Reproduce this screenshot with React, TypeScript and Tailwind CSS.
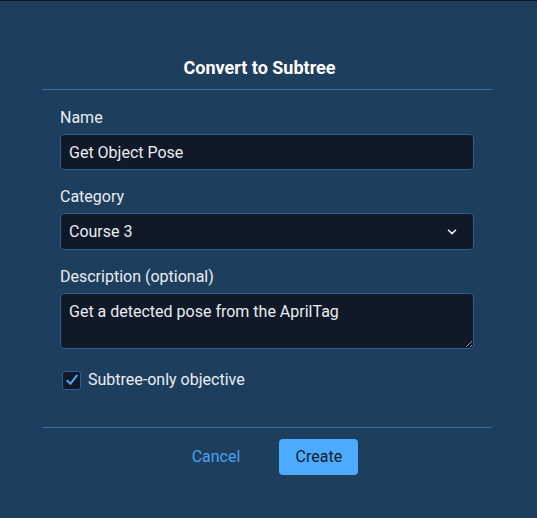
import React from "react";

export default function App() {
  return (
    <div
      className="w-[537px] h-[518px] bg-[#1e3e5d] border-t border-[#0d1520] overflow-hidden"
      style={{ fontFamily: "Roboto, 'Liberation Sans', sans-serif" }}
    >
      <div className="mx-[42px] w-[450px]">
        <div className="pt-[55px] pb-[9px] border-b border-[#3a6fa3] text-center pr-[15px]">
          <h2 className="text-[18px] leading-[24px] font-bold text-white">Convert to Subtree</h2>
        </div>
        <div className="pl-[18px] pt-[18px] flex flex-col">
          <label className="text-[16px] leading-[20px] text-[#e8edf2]">Name</label>
          <input
            readOnly
            value="Get Object Pose"
            className="mt-[6px] w-[414px] h-[36px] rounded-[4px] bg-[#111827] border border-[#2d5f93] px-[8px] text-[16px] text-[#e8edf2] outline-none"
          />
          <label className="mt-[17px] text-[16px] leading-[20px] text-[#e8edf2]">Category</label>
          <div className="mt-[6px] w-[414px] h-[37px] rounded-[4px] bg-[#111827] border border-[#2d5f93] pl-[8px] pr-[16px] flex items-center justify-between">
            <span className="text-[16px] text-[#e8edf2]">Course 3</span>
            <svg width="10" height="6" viewBox="0 0 10 6" fill="none">
              <path d="M1.5 1.2L5 4.6L8.5 1.2" stroke="#e8edf2" strokeWidth="1.6" strokeLinecap="round" strokeLinejoin="round" />
            </svg>
          </div>
          <label className="mt-[17px] text-[16px] leading-[20px] text-[#e8edf2]">Description (optional)</label>
          <textarea
            readOnly
            value="Get a detected pose from the AprilTag"
            className="mt-[6px] w-[414px] h-[56px] rounded-[4px] bg-[#111827] border border-[#2d5f93] px-[8px] py-[7px] text-[16px] leading-[22px] text-[#e8edf2] outline-none resize-y"
            style={{ colorScheme: "dark" }}
          />
          <div className="mt-[21px] flex items-center gap-[7px] pl-[2px]">
            <span className="w-[19px] h-[19px] rounded-[3px] bg-[#111827] border border-[#2d5f93] flex items-center justify-center">
              <svg width="14" height="14" viewBox="0 0 14 14" fill="none">
                <path d="M2.2 7.6L5.4 10.8L11.8 2.6" stroke="#4aa8ff" strokeWidth="2" strokeLinecap="round" strokeLinejoin="round" />
              </svg>
            </span>
            <span className="text-[16px] leading-[20px] text-[#e8edf2]">Subtree-only objective</span>
          </div>
        </div>
        <div className="mt-[37px] border-t border-[#3a6fa3] pt-[11px] flex justify-center items-center gap-[27px] pl-[4px]">
          <button className="h-[36px] px-[12px] text-[16px] text-[#4aa3ef]">Cancel</button>
          <button className="h-[36px] w-[79px] rounded-[4px] bg-[#4dabff] text-[16px] text-[#0f1a2a]">Create</button>
        </div>
      </div>
    </div>
  );
}
